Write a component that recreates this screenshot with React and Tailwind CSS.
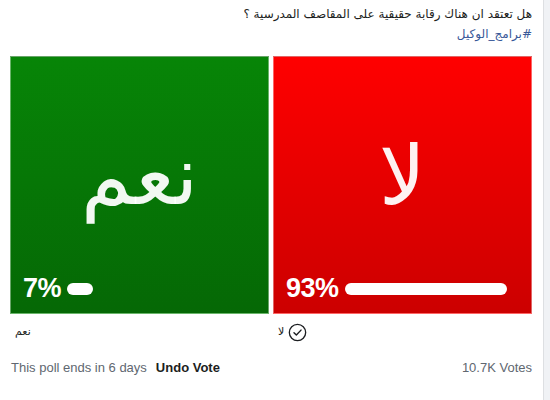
import React from "react";

const options = [
  {
    id: "yes",
    big: "نعم",
    label: "نعم",
    percent: 7,
    bg: "bg-gradient-to-b from-[#078507] to-[#056805]",
    voted: false,
  },
  {
    id: "no",
    big: "لا",
    label: "لا",
    percent: 93,
    bg: "bg-gradient-to-b from-[#ff0000] to-[#cc0000]",
    voted: true,
  },
];

function CheckCircle() {
  return (
    <svg width="19" height="19" viewBox="0 0 20 20" fill="none" className="text-[#1c1e21]">
      <circle cx="10" cy="10" r="8.6" stroke="currentColor" strokeWidth="1.4" />
      <path d="M6.3 10.2l2.5 2.5 4.9-5.2" stroke="currentColor" strokeWidth="1.5" strokeLinecap="round" strokeLinejoin="round" />
    </svg>
  );
}

export default function App() {
  return (
    <div className="flex w-[550px] h-[400px] bg-white overflow-hidden font-['Liberation_Sans','DejaVu_Sans',sans-serif]">
      <div className="w-[543px] pl-[10px] pr-[11px]">
        {/* Question */}
        <div dir="rtl" className="pt-[4px] text-[12px] leading-[20px] text-[#1c1e21] font-['DejaVu_Sans',sans-serif]">
          <div>هل تعتقد ان هناك رقابة حقيقية على المقاصف المدرسية ؟</div>
          <div className="text-[#385898]">#برامج_الوكيل</div>
        </div>

        {/* Poll images */}
        <div className="mt-[12px] grid grid-cols-2 gap-[4px]">
          {options.map((opt) => (
            <div key={opt.id}>
              <div className={`relative h-[258px] border border-white/40 ${opt.bg}`}>
                <div className="flex h-full items-center justify-center pb-[18px]">
                  <span className="text-white/95 text-[82px] leading-none font-['DejaVu_Sans',sans-serif]">
                    {opt.big}
                  </span>
                </div>
                <div className="absolute left-[12px] right-[24px] bottom-[11px] flex items-center gap-[6px]">
                  <span className="text-white font-bold text-[27px] leading-none tracking-[-0.5px]">
                    {opt.percent}%
                  </span>
                  <div className="flex-1">
                    <div
                      className="h-[12px] rounded-full bg-white"
                      style={{ width: opt.percent < 20 ? "26px" : "100%" }}
                    />
                  </div>
                </div>
              </div>
              <div className="flex items-center gap-[4px] h-[36px] pl-[2px] pt-[1px]">
                <span className="text-[11px] text-[#1c1e21] font-['DejaVu_Sans',sans-serif] pl-[3px]">
                  {opt.label}
                </span>
                {opt.voted && <CheckCircle />}
              </div>
            </div>
          ))}
        </div>

        {/* Footer */}
        <div className="mt-[8px] flex items-center justify-between text-[13px] text-[#606770] pl-[1px]">
          <div className="flex items-center gap-[9px]">
            <span>This poll ends in 6 days</span>
            <span className="font-bold text-[#1c1e21]">Undo Vote</span>
          </div>
          <span>10.7K Votes</span>
        </div>
      </div>
      <div className="w-[7px] h-full bg-[#f0f2f5] border-l border-[#dddfe2]" />
    </div>
  );
}
